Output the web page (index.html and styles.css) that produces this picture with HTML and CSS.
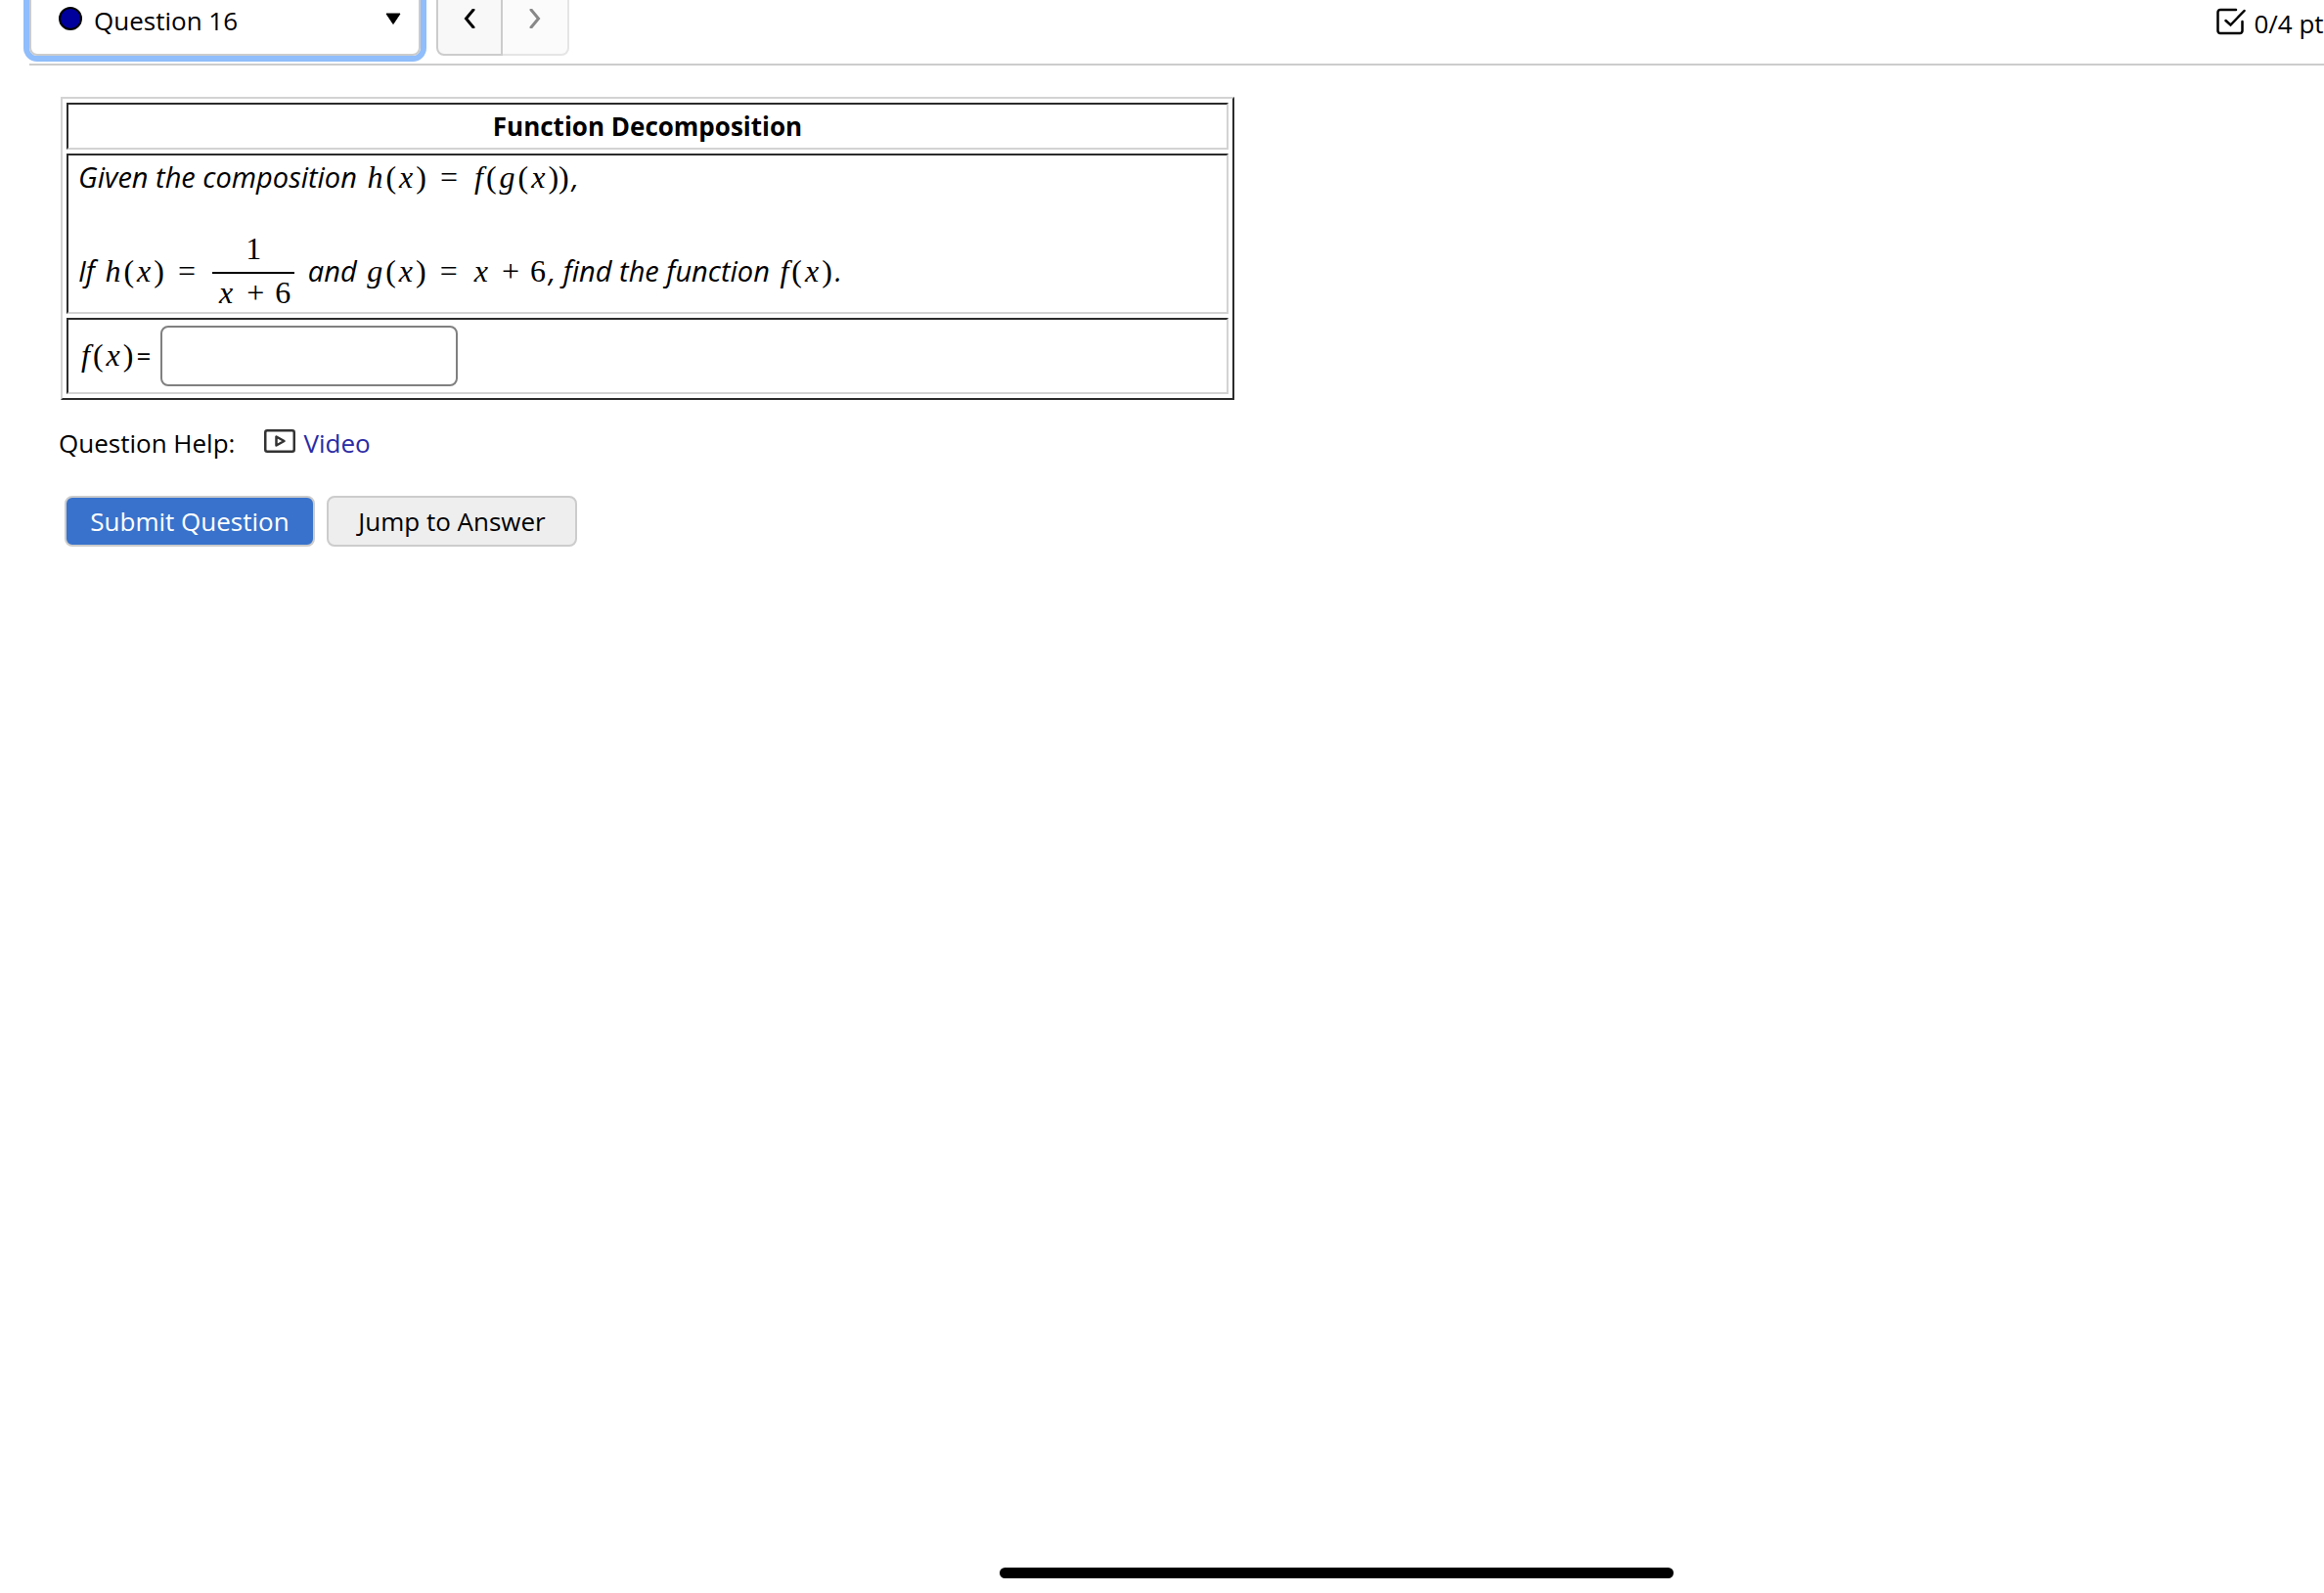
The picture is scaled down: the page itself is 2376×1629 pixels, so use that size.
FILE: index.html
```html
<!DOCTYPE html>
<html lang="en">
<head>
  <meta charset="UTF-8">
  <meta name="viewport" content="width=device-width, initial-scale=1.0">
  <title>Question 16</title>
  <link rel="stylesheet" href="styles.css">
</head>
<body>
  <header class="topbar">
    <div class="picker">
      <svg class="dot" viewBox="0 0 24 24" aria-hidden="true"><circle cx="12" cy="12" r="11" fill="#00009c" stroke="#000" stroke-width="2"/></svg>
      <select id="question" aria-label="Question">
        <option selected>Question 16</option>
      </select>
      <svg class="caret" viewBox="0 0 16 12" aria-hidden="true"><path d="M1 1h14L8 11.500z" fill="#000" stroke="#000" stroke-linejoin="round"/></svg>
    </div>
    <div class="pager">
      <button type="button" aria-label="Previous question">
        <svg viewBox="0 0 12 20"><path d="M10 1L2.500 10l7.500 9"/></svg>
      </button>
      <button type="button" aria-label="Next question" disabled>
        <svg viewBox="0 0 12 20"><path d="M2 1l7.500 9L2 19"/></svg>
      </button>
    </div>
    <div class="score">
      <svg viewBox="0 0 30 28" aria-hidden="true"><path d="M20 2H4a2.500 2.500 0 0 0-2.500 2.500v19A2.500 2.500 0 0 0 4 26h20a2.500 2.500 0 0 0 2.500-2.500V14M9.500 13l5 4.500L28.500 3"/></svg>
      <span>0/4 pts</span>
    </div>
  </header>

  <main>
    <form id="questionForm">
      <table class="problem">
        <tr>
          <th>Function Decomposition</th>
        </tr>
        <tr>
          <td class="prompt">
            <p>Given the composition <span class="math"><i>h</i>(<i>x</i>)<b>=</b><i>f</i>(<i>g</i>(<i>x</i>))</span>,</p>
            <p>If <span class="math"><i>h</i>(<i>x</i>)<b>=</b><span class="frac"><span class="num">1</span><span class="den"><i>x</i><b class="plus">+</b>6</span></span></span> and <span class="math"><i>g</i>(<i>x</i>)<b>=</b><i>x</i><b class="plus">+</b>6</span>, find the function <span class="math"><i>f</i>(<i>x</i>)</span>.</p>
          </td>
        </tr>
        <tr>
          <td class="answer">
            <label for="answer"><span class="math"><i>f</i>(<i>x</i>)</span>=</label>
            <input type="text" id="answer" name="answer">
          </td>
        </tr>
      </table>
      <p class="help">
        Question Help:
        <a href="#video">
          <svg viewBox="0 0 32 24" aria-hidden="true"><rect x="1.250" y="1.250" width="29.500" height="21.500" rx="2"/><path d="M12.500 7.500v9l8-4.500z"/></svg>
          Video
        </a>
      </p>
      <div class="actions">
        <button type="submit" class="primary">Submit Question</button>
        <button type="button">Jump to Answer</button>
      </div>
    </form>
  </main>
  <div class="home-bar"></div>
</body>
</html>
```

FILE: styles.css
```css
body {
  margin: 0;
  min-height: 100vh;
  background-color: #fff;
  color: #000;
  font-family: "Trebuchet MS", "Open Sans", sans-serif;
  font-size: 26px;
  line-height: 36px;
  overflow: hidden;
}
button, input, select {
  font: inherit;
  color: inherit;
}
/* the bar is scrolled partly out of view */
.topbar {
  display: flex;
  margin: -19px 0 0 30px;
  padding-bottom: 8px;
  border-bottom: 2px solid #ccc;
}
.picker {
  display: flex;
  align-items: center;
  width: 400px;
  height: 76px;
  padding: 0 18px 0 28px;
  box-sizing: border-box;
  border: 2px solid #ccc;
  border-radius: 8px;
  box-shadow: 0 0 0 6px #90bdfb;
}
.picker select {
  flex: 1;
  padding: 3px 0 0 12px;
  appearance: none;
  border: none;
  outline: none;
  background: none;
}
.dot {
  width: 24px;
  height: 24px;
}
.caret {
  width: 16px;
  height: 12px;
}
.pager {
  display: flex;
  margin-left: 16px;
}
.pager button {
  width: 68px;
  height: 76px;
  padding: 0;
  border: 2px solid #ccc;
  border-radius: 0 0 0 8px;
  background-color: #f8f8f8;
}
.pager button:disabled {
  border-color: #e5e5e5;
  border-left: none;
  border-radius: 0 0 8px 0;
  background-color: #fbfbfb;
}
.pager svg {
  width: 12px;
  height: 20px;
  fill: none;
  stroke: #000;
  stroke-width: 3;
  stroke-linecap: round;
}
.pager button:disabled svg {
  stroke: #888;
}
.score {
  display: flex;
  align-items: center;
  gap: 8px;
  margin: 10px -12px 0 auto;
  white-space: nowrap;
}
.score svg {
  width: 30px;
  height: 28px;
  padding-bottom: 4px;
  fill: none;
  stroke: #000;
  stroke-width: 2.5;
  stroke-linecap: round;
}
main {
  padding: 32px 60px;
}
.problem {
  width: 1200px;
  margin-left: 2px;
  border: 2px solid;
  border-color: #d3d3d3 #2b2b2b #2b2b2b #d3d3d3;
  border-spacing: 4px;
}
.problem th, .problem td {
  padding: 4px 10px;
  border: 2px solid;
  border-color: #2b2b2b #d3d3d3 #d3d3d3 #2b2b2b;
  text-align: left;
}
.problem th {
  text-align: center;
}
.problem .prompt {
  padding: 4px 10px 1px;
  font-size: 29px;
  font-style: italic;
}
.prompt p {
  margin: 0;
}
.prompt p + p {
  margin-top: 36px;
}
.math {
  margin-right: 3px;
  font-family: "Liberation Serif", serif;
  font-size: 32px;
  font-style: normal;
}
.math i {
  padding: 0 3px;
}
.math b {
  padding: 0 14px;
  font-weight: normal;
}
.math .plus {
  padding: 0 11px;
}
.frac {
  display: inline-block;
  margin: 0 3px;
  vertical-align: -22px;
  text-align: center;
}
.num, .den {
  display: block;
  line-height: 38px;
}
.num {
  padding-bottom: 5px;
}
.den {
  padding: 0 4px;
  border-top: 2px solid #000;
}
.answer label {
  margin-right: 3px;
}
.answer input {
  width: 304px;
  height: 62px;
  margin: 2px 0;
  padding: 0 10px;
  box-sizing: border-box;
  border: 2px solid #808080;
  border-radius: 8px;
}
.help {
  display: flex;
  gap: 30px;
  margin: 26px 0 36px;
}
.help a {
  display: flex;
  align-items: center;
  gap: 8px;
  color: #2b2ba5;
  text-decoration: none;
}
.help svg {
  width: 32px;
  height: 24px;
  padding-bottom: 4px;
  fill: none;
  stroke: #333;
  stroke-width: 2.5;
  stroke-linejoin: round;
}
.actions {
  display: flex;
  gap: 12px;
  margin-left: 6px;
}
.actions button {
  min-width: 256px;
  height: 52px;
  padding: 0 24px;
  border: 2px solid #ccc;
  border-radius: 8px;
  background-color: #eee;
}
.actions .primary {
  background-color: #3872cc;
  color: #fff;
}
.home-bar {
  position: fixed;
  bottom: 15px;
  left: 43%;
  width: 29%;
  height: 11px;
  border-radius: 6px;
  background-color: #000;
}
```
